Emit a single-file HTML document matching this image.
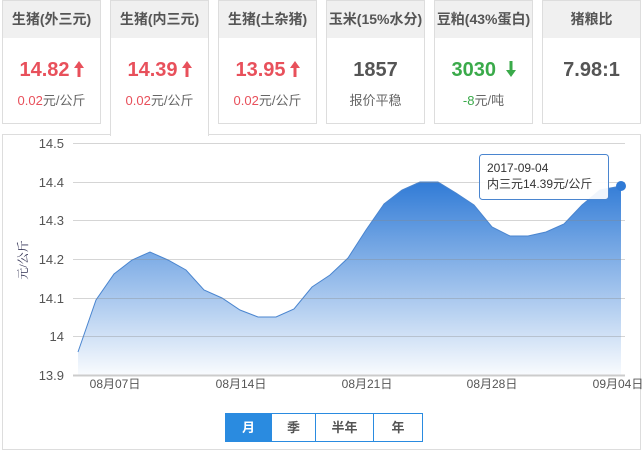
<!DOCTYPE html>
<html><head><meta charset="utf-8"><style>
body{margin:0;width:643px;height:452px;background:#fff;font-family:"Liberation Sans","Noto Sans CJK SC",sans-serif;position:relative;overflow:hidden}
.card{position:absolute;top:0;height:124px;border:1px solid #ddd;background:#fff;box-sizing:border-box;text-align:center}
.card .h{height:37px;background:#f0f0f0;line-height:37px;font-size:14px;color:#555;font-weight:bold}
.card .v{margin-top:19px;font-size:20px;font-weight:bold;color:#555;height:26px;line-height:26px}
.card .s{font-size:13px;color:#666;margin-top:7px}
.card .r{color:#e8505b}.card .g{color:#3aaa4a}
.panel{position:absolute;left:2px;top:134px;width:639px;height:316px;border:1px solid #ddd;box-sizing:border-box}
.btns{position:absolute;left:225px;top:413px;height:29px;border:1px solid #2a8be0;display:flex;font-size:13px;font-weight:bold;color:#555;box-sizing:border-box}
.btns div{line-height:27px;text-align:center;border-left:1px solid #2a8be0}
svg.a{vertical-align:-1px;margin-left:4px}
</style></head><body>
<div class="card" style="left:2px;width:99px"><div class="h">生猪(外三元)</div><div class="v r">14.82<svg class="a" width="10" height="16"><path d="M5,0 L10,7 L6.5,7 L6.5,16 L3.5,16 L3.5,7 L0,7Z" fill="#e8505b"/></svg></div><div class="s"><span class="r">0.02</span>元/公斤</div></div>
<div class="card" style="left:110px;width:99px;height:136px;border-bottom:none;z-index:2"><div class="h">生猪(内三元)</div><div class="v r">14.39<svg class="a" width="10" height="16"><path d="M5,0 L10,7 L6.5,7 L6.5,16 L3.5,16 L3.5,7 L0,7Z" fill="#e8505b"/></svg></div><div class="s"><span class="r">0.02</span>元/公斤</div></div>
<div class="card" style="left:218px;width:99px"><div class="h">生猪(土杂猪)</div><div class="v r">13.95<svg class="a" width="10" height="16"><path d="M5,0 L10,7 L6.5,7 L6.5,16 L3.5,16 L3.5,7 L0,7Z" fill="#e8505b"/></svg></div><div class="s"><span class="r">0.02</span>元/公斤</div></div>
<div class="card" style="left:326px;width:99px"><div class="h">玉米(15%水分)</div><div class="v">1857</div><div class="s">报价平稳</div></div>
<div class="card" style="left:434px;width:99px"><div class="h">豆粕(43%蛋白)</div><div class="v g">3030 <svg class="a" width="10" height="16"><path d="M3.5,0 L6.5,0 L6.5,9 L10,9 L5,16 L0,9 L3.5,9Z" fill="#3aaa4a"/></svg></div><div class="s"><span class="g">-8</span>元/吨</div></div>
<div class="card" style="left:542px;width:99px"><div class="h">猪粮比</div><div class="v">7.98:1</div></div>
<div class="panel"></div>
<svg style="position:absolute;left:0;top:0" width="643" height="452">
<defs><linearGradient id="gr" gradientUnits="userSpaceOnUse" x1="0" y1="180" x2="0" y2="375"><stop offset="0" stop-color="#2f7ad6"/><stop offset="1" stop-color="#2f7ad6" stop-opacity="0.03"/></linearGradient></defs>
<path d="M78,352 L96,300 114,274 132,260 150,252 168,260 186,270 204,290 222,298 240,310 258,317 276,317 294,309 312,287 330,275 348,258 366,230 384,204 402,190 420,182 438,182 456,193 474,205 492,227 510,236 528,236 546,232 564,224 582,205 600,190 621,186 L621,375 L78,375 Z" fill="url(#gr)"/>
<path d="M78,352 L96,300 114,274 132,260 150,252 168,260 186,270 204,290 222,298 240,310 258,317 276,317 294,309 312,287 330,275 348,258 366,230 384,204 402,190 420,182 438,182 456,193 474,205 492,227 510,236 528,236 546,232 564,224 582,205 600,190 621,186" fill="none" stroke="#4a85cf" stroke-width="1"/>
<g stroke="#888" stroke-opacity="0.35" stroke-width="1">
<line x1="73" x2="625" y1="143.5" y2="143.5"/><line x1="73" x2="625" y1="182.5" y2="182.5"/><line x1="73" x2="625" y1="220.5" y2="220.5"/><line x1="73" x2="625" y1="259.5" y2="259.5"/><line x1="73" x2="625" y1="298.5" y2="298.5"/><line x1="73" x2="625" y1="336.5" y2="336.5"/></g>
<line x1="73" x2="625" y1="375.5" y2="375.5" stroke="#ccc" stroke-width="2"/>
<g font-size="13" fill="#555" text-anchor="end" font-family="Liberation Sans,sans-serif">
<text x="64" y="148">14.5</text><text x="64" y="187">14.4</text><text x="64" y="225">14.3</text><text x="64" y="264">14.2</text><text x="64" y="303">14.1</text><text x="64" y="341">14</text><text x="64" y="380">13.9</text></g>
<text transform="translate(27,260) rotate(-90)" text-anchor="middle" font-size="12" fill="#335" font-family="Liberation Serif,'Noto Serif CJK SC',serif">元/公斤</text>
<g font-size="12" fill="#555" text-anchor="middle" font-family="Liberation Sans,'Noto Sans CJK SC',sans-serif">
<text x="115" y="388">08月07日</text><text x="241" y="388">08月14日</text><text x="367" y="388">08月21日</text><text x="492" y="388">08月28日</text><text x="618" y="388">09月04日</text></g>
<rect x="479.5" y="154.5" width="129" height="45" rx="3" fill="#fff" fill-opacity="0.92" stroke="#4a85cf"/>
<text x="487" y="172" font-size="12" fill="#333" font-family="Liberation Sans,sans-serif">2017-09-04</text>
<text x="487" y="188" font-size="12" fill="#333" font-family="Liberation Sans,'Noto Sans CJK SC',sans-serif">内三元14.39元/公斤</text>
<circle cx="621" cy="186" r="5" fill="#2f7ad6"/>
</svg>
<div class="btns"><div style="width:45px;background:#2a8be0;color:#fff;border:none">月</div><div style="width:43px">季</div><div style="width:57px">半年</div><div style="width:48px">年</div></div>
</body></html>
